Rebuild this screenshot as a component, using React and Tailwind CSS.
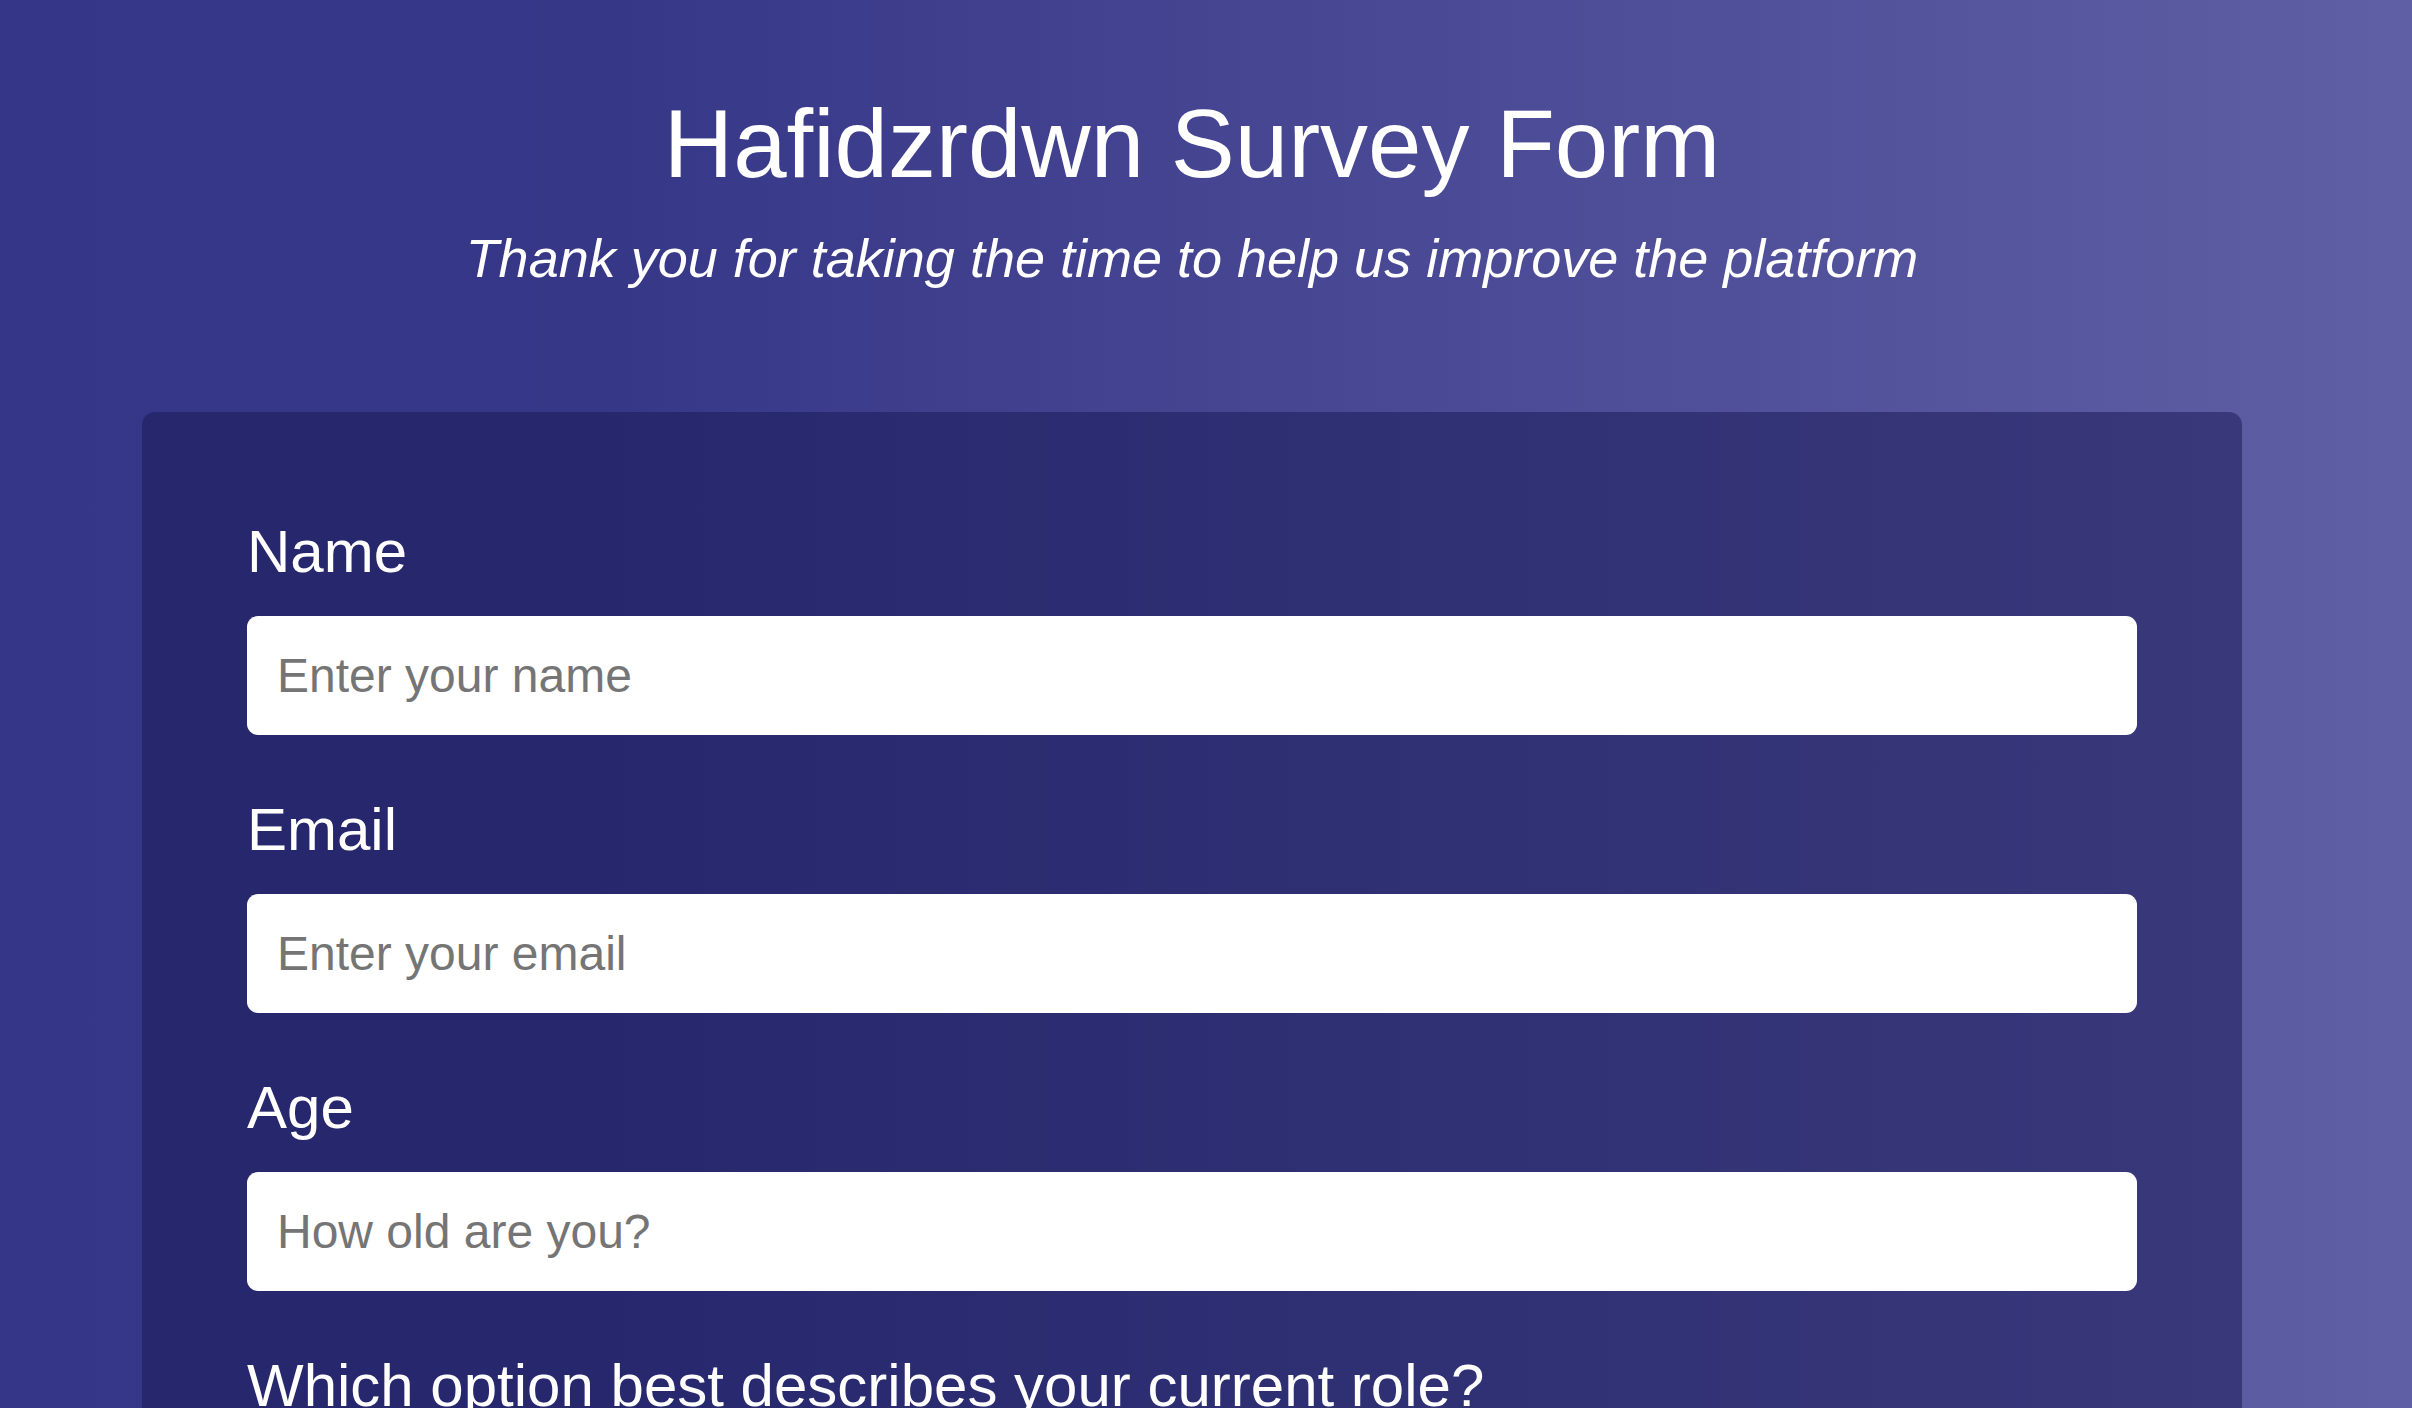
import { useState } from "react";

const FIELDS = [
  { id: "name", label: "Name", type: "text", placeholder: "Enter your name" },
  { id: "email", label: "Email", type: "email", placeholder: "Enter your email" },
  { id: "number", label: "Age", type: "number", placeholder: "How old are you?" },
];

function Field({ id, label, type, placeholder, value, onChange }) {
  return (
    <div className="mb-[63px]">
      <label htmlFor={id} className="block pt-[2px] text-[60px] leading-none text-white">
        {label}
      </label>
      <input
        id={id}
        type={type}
        value={value}
        onChange={(e) => onChange(id, e.target.value)}
        placeholder={placeholder}
        className="mt-[34px] block h-[119px] w-full rounded-[11px] bg-white px-[30px] text-[48px] text-[#222] outline-none placeholder:text-[#757575]"
      />
    </div>
  );
}

export default function App() {
  const [form, setForm] = useState({ name: "", email: "", number: "" });
  const update = (k, v) => setForm((f) => ({ ...f, [k]: v }));

  return (
    <div
      className="h-screen w-full overflow-hidden bg-[linear-gradient(90deg,#363688_0%,#373788_25%,#5f5fa5_100%)] pr-[28px] text-white"
      style={{ fontFamily: '"Liberation Sans", Arial, sans-serif' }}
    >
      <header className="pt-[96px] text-center">
        <h1 className="text-[96px] font-normal leading-none">Hafidzrdwn Survey Form</h1>
        <p className="mt-[39px] text-[54px] italic leading-none">
          Thank you for taking the time to help us improve the platform
        </p>
      </header>

      <form
        className="mx-auto mt-[127px] w-[2100px] rounded-[13px] bg-[rgba(27,27,90,0.55)] px-[105px] pb-[80px] pt-[108px]"
        onSubmit={(e) => e.preventDefault()}
      >
        {FIELDS.map((f) => (
          <Field key={f.id} {...f} value={form[f.id]} onChange={update} />
        ))}

        <div className="mb-[63px]">
          <p className="pt-[2px] text-[60px] leading-none">Which option best describes your current role?</p>
          <select className="mt-[34px] block h-[119px] w-full rounded-[11px] bg-white px-[30px] text-[48px] text-[#222] outline-none">
            <option>Select current role</option>
            <option>Student</option>
            <option>Full Time Job</option>
            <option>Full Time Learner</option>
            <option>Prefer not to say</option>
            <option>Other</option>
          </select>
        </div>
      </form>
    </div>
  );
}
